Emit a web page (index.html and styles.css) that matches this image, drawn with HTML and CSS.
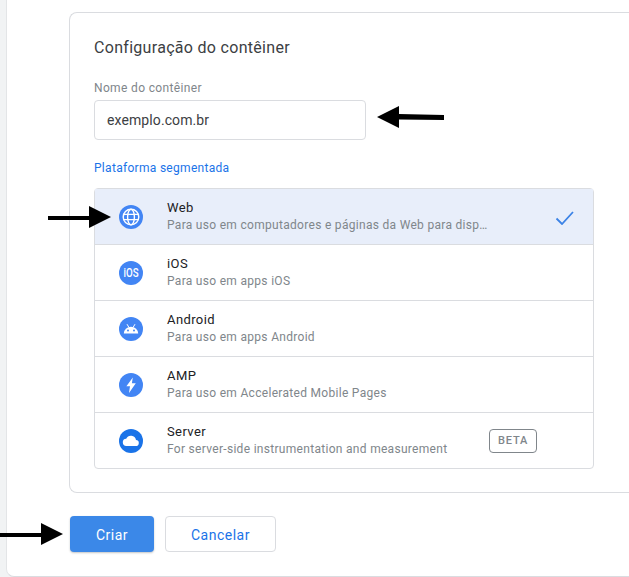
FILE: index.html
```html
<!DOCTYPE html>
<html lang="pt-br">
<head>
  <meta charset="UTF-8" />
  <meta name="viewport" content="width=device-width, initial-scale=1" />
  <title>Configuração do contêiner</title>
  <link rel="stylesheet" href="styles.css">
</head>
<body>
  <div class="painel">
    <div class="cartao">
      <h2 class="titulo">Configuração do contêiner</h2>

      <label class="rotulo" for="nome">Nome do contêiner</label>
      <input class="campo" id="nome" type="text" value="exemplo.com.br" />

      <p class="subtitulo">Plataforma segmentada</p>

      <ul class="lista">
        <li class="item ativo">
          <svg class="icone" viewBox="0 0 24 24">
            <circle cx="12" cy="12" r="12" fill="#4285f4"/>
            <g fill="none" stroke="#fff" stroke-width="1.4">
              <circle cx="12" cy="12" r="7.8"/>
              <ellipse cx="12" cy="12" rx="3.4" ry="7.8"/>
              <path d="M4.6 9.4h14.8M4.6 14.6h14.8"/>
            </g>
          </svg>
          <div class="textos">
            <strong>Web</strong>
            <span>Para uso em computadores e páginas da Web para disp…</span>
          </div>
          <svg class="marca" viewBox="0 0 20 16">
            <path d="M1.5 9.5l5.5 5.5L18 3" fill="none" stroke="#3b82e6" stroke-width="1.8"/>
          </svg>
        </li>
        <li class="item">
          <svg class="icone" viewBox="0 0 24 24">
            <circle cx="12" cy="12" r="12" fill="#4285f4"/>
            <text class="ios" x="4.6" y="16.4" textLength="15" lengthAdjust="spacingAndGlyphs">iOS</text>
          </svg>
          <div class="textos">
            <strong>iOS</strong>
            <span>Para uso em apps iOS</span>
          </div>
        </li>
        <li class="item">
          <svg class="icone" viewBox="0 0 24 24">
            <circle cx="12" cy="12" r="12" fill="#4285f4"/>
            <path d="M4.8 16.6a7.2 6.8 0 0 1 14.4 0z" fill="#fff"/>
            <path d="M8 7.2l1.7 2.8M16 7.2l-1.7 2.8" stroke="#fff" stroke-width="1" fill="none"/>
            <circle cx="9" cy="13.4" r="1" fill="#4285f4"/>
            <circle cx="15" cy="13.4" r="1" fill="#4285f4"/>
          </svg>
          <div class="textos">
            <strong>Android</strong>
            <span>Para uso em apps Android</span>
          </div>
        </li>
        <li class="item">
          <svg class="icone" viewBox="0 0 24 24">
            <circle cx="12" cy="12" r="12" fill="#4285f4"/>
            <path d="M13.8 4.6L7.4 13.2h3.6l-1 6.8 6.8-9.8h-3.9z" fill="#fff"/>
          </svg>
          <div class="textos">
            <strong>AMP</strong>
            <span>Para uso em Accelerated Mobile Pages</span>
          </div>
        </li>
        <li class="item">
          <svg class="icone" viewBox="0 0 24 24">
            <circle cx="12" cy="12" r="12" fill="#1a73e8"/>
            <path d="M7.6 17a3.6 3.6 0 0 1-.4-7.2 5.2 5.2 0 0 1 9.8 1.2 3 3 0 0 1-.4 6z" fill="#fff"/>
          </svg>
          <div class="textos">
            <strong>Server</strong>
            <span>For server-side instrumentation and measurement</span>
          </div>
          <span class="beta">BETA</span>
        </li>
      </ul>
    </div>

    <div class="acoes">
      <button class="botao primario">Criar</button>
      <button class="botao secundario">Cancelar</button>
    </div>
  </div>

  <!-- setas desenhadas por cima da tela -->
  <svg class="seta seta-nome" viewBox="0 0 68 24"><path d="M0 11L22 0v8l45 1v5l-45-.5V22z"/></svg>
  <svg class="seta seta-web" viewBox="0 0 64 24"><path d="M0 10l41 0V0l22 11-22 11v-8L0 14z"/></svg>
  <svg class="seta seta-criar" viewBox="0 0 64 24"><path d="M0 10l41 0V0l22 11-22 11v-8L0 14z"/></svg>
</body>
</html>
```

FILE: styles.css
```css
* { box-sizing: border-box; }
html, body {
  height: 100%;
}
body {
  margin: 0;
  background-color: #f1f3f4;
  font-family: Roboto, Arial, sans-serif;
  color: #3c4043;
  overflow: hidden;
}
.painel {
  height: 577px;
  margin-left: 6px;
  padding: 12px 0 0 62px;
  background: #fff;
  border-left: 1px solid #e3e5e7;
  border-bottom: 1px solid #dadce0;
  border-bottom-left-radius: 8px;
}
.cartao {
  height: 481px;
  margin-right: -1px;
  padding: 25px 0 0 24px;
  border: 1px solid #dadce0;
  border-right: none;
  border-radius: 8px 0 0 8px;
}
.titulo {
  margin: 0;
  font-size: 16px;
  font-weight: 400;
  line-height: 20px;
  letter-spacing: 0.3px;
  color: #3c4043;
}
.rotulo {
  display: block;
  margin-top: 22px;
  font-size: 12px;
  line-height: 16px;
  letter-spacing: 0.35px;
  color: #80868b;
}
.campo {
  display: block;
  width: 272px;
  height: 40px;
  margin-top: 4px;
  padding: 0 12px;
  border: 1px solid #dadce0;
  border-radius: 4px;
  font-family: inherit;
  font-size: 14px;
  letter-spacing: 0.1px;
  color: #3c4043;
}
.subtitulo {
  margin: 20px 0 0 0;
  font-size: 12px;
  line-height: 16px;
  letter-spacing: 0.3px;
  color: #1a73e8;
}
.lista {
  width: 500px;
  margin: 12px 0 0 0;
  padding: 0;
  list-style: none;
  border: 1px solid #dadce0;
  border-radius: 4px;
}
.item {
  display: flex;
  align-items: center;
  height: 56px;
  padding-left: 23px;
  border-bottom: 1px solid #dadce0;
}
.item:last-child {
  height: 55px;
  border-bottom: none;
}
.item.ativo {
  background: #e8eefa;
}
.icone {
  flex: none;
  width: 24px;
  height: 24px;
  margin-left: 1px;
  margin-right: 24px;
}
.ios {
  font-family: Roboto, Arial, sans-serif;
  font-size: 12px;
  font-weight: 500;
  fill: #fff;
}
.textos {
  display: flex;
  flex-direction: column;
  flex: 1;
  padding-bottom: 1px;
}
.textos strong {
  font-size: 13px;
  font-weight: 400;
  line-height: 18px;
  letter-spacing: 0.4px;
  color: #202124;
}
.textos span {
  font-size: 12px;
  line-height: 17px;
  letter-spacing: 0.3px;
  color: #80868b;
}
.marca {
  flex: none;
  width: 20px;
  height: 16px;
  margin-right: 18px;
}
.beta {
  flex: none;
  width: 48px;
  height: 24px;
  margin-right: 56px;
  border: 1px solid #80868b;
  border-radius: 4px;
  font-size: 11px;
  font-weight: 500;
  line-height: 22px;
  letter-spacing: 0.8px;
  text-align: center;
  color: #80868b;
}
.acoes {
  display: flex;
  gap: 11px;
  margin: 23px 0 0 1px;
}
.botao {
  height: 36px;
  padding-top: 2px;
  border-radius: 4px;
  font-family: inherit;
  font-size: 14px;
  font-weight: 400;
  letter-spacing: 0.5px;
}
.primario {
  width: 84px;
  border: none;
  background-color: #3b88e8;
  color: #fff;
  box-shadow: 0 1px 2px rgba(60,64,67,0.3);
}
.secundario {
  width: 111px;
  border: 1px solid #dadce0;
  background: #fff;
  color: #1a73e8;
}
.seta {
  position: absolute;
  fill: #000;
}
.seta-nome {
  left: 377px;
  top: 106px;
  width: 68px;
  height: 24px;
}
.seta-web {
  left: 48px;
  top: 206px;
  width: 64px;
  height: 24px;
}
.seta-criar {
  left: 0;
  top: 523px;
  width: 64px;
  height: 24px;
}
```
